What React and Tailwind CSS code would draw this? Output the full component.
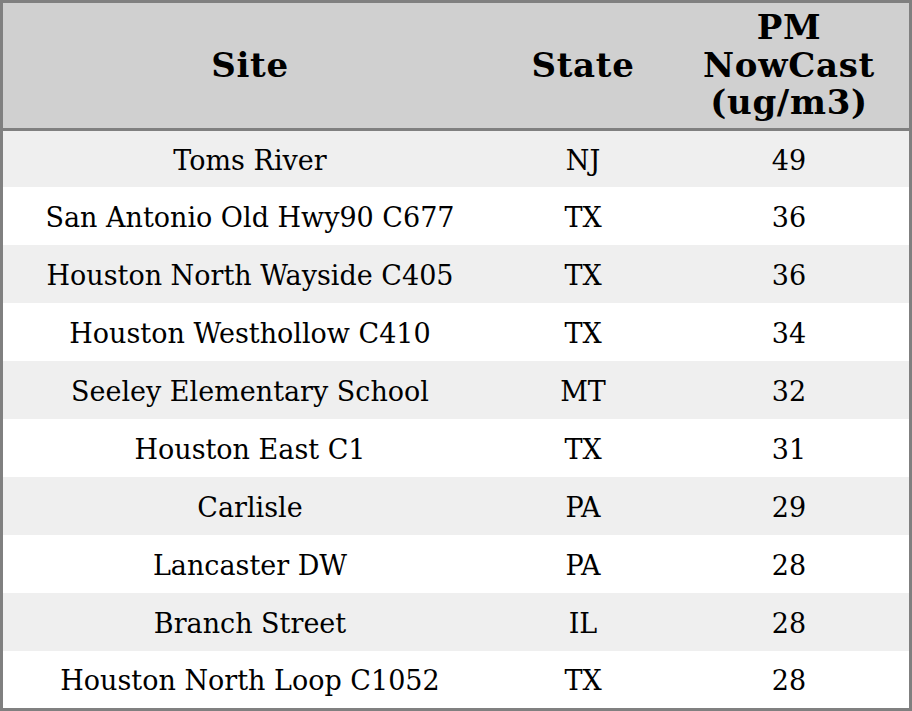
import React from "react";

const rows = [
  ["Toms River", "NJ", "49"],
  ["San Antonio Old Hwy90 C677", "TX", "36"],
  ["Houston North Wayside C405", "TX", "36"],
  ["Houston Westhollow C410", "TX", "34"],
  ["Seeley Elementary School", "MT", "32"],
  ["Houston East C1", "TX", "31"],
  ["Carlisle", "PA", "29"],
  ["Lancaster DW", "PA", "28"],
  ["Branch Street", "IL", "28"],
  ["Houston North Loop C1052", "TX", "28"],
];

export default function App() {
  return (
    <div
      className="w-[912px] h-[711px] bg-white text-black"
      style={{ fontFamily: '"DejaVu Serif", serif' }}
    >
      <div className="w-[912px] h-[711px] border-[3px] border-[#808080] flex flex-col">
        <div className="h-[128px] bg-[#d0d0d0] border-b-[3px] border-[#808080] grid grid-cols-[494px_172px_240px] items-center text-center font-bold text-[34px] leading-[37.5px] tracking-[0.7px]">
          <div>Site</div>
          <div>State</div>
          <div>
            PM
            <br />
            NowCast
            <br />
            (ug/m3)
          </div>
        </div>
        <div className="flex-1 grid grid-rows-[56px_repeat(8,58px)_57px]">
          {rows.map((r, i) => (
            <div
              key={i}
              className={`grid grid-cols-[494px_172px_240px] items-center text-center text-[27px] pt-[4px] ${
                i % 2 === 0 ? "bg-[#efefef]" : "bg-white"
              }`}
            >
              <div>{r[0]}</div>
              <div>{r[1]}</div>
              <div>{r[2]}</div>
            </div>
          ))}
        </div>
      </div>
    </div>
  );
}
